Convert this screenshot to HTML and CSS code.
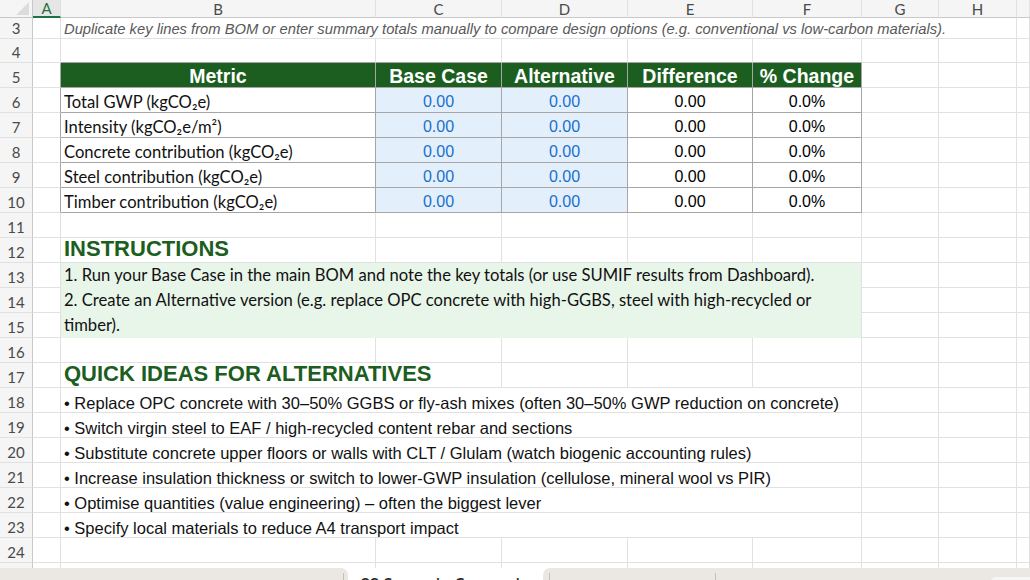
FILE: index.html
```html
<!DOCTYPE html>
<html lang="en">
<head>
  <meta charset="UTF-8">
  <title>Scenario Comparison</title>
  <link rel="stylesheet" href="styles.css">
</head>
<body>
  <table class="sheet">
    <colgroup>
      <col class="w-hdr"><col class="w-a"><col class="w-b"><col class="w-c"><col class="w-d">
      <col class="w-e"><col class="w-f"><col class="w-g"><col class="w-h"><col class="w-i">
    </colgroup>

    <!-- column letters -->
    <tr class="col-head">
      <th class="corner"><span class="tri"></span></th>
      <th class="sel">A</th><th>B</th><th>C</th><th>D</th><th>E</th><th>F</th><th>G</th><th>H</th><th></th>
    </tr>

    <tr class="r-note">
      <th>3</th><td></td>
      <td colspan="7" class="note">Duplicate key lines from BOM or enter summary totals manually to compare design options (e.g. conventional vs low-carbon materials).</td>
      <td></td>
    </tr>
    <tr class="r-gap">
      <th>4</th><td></td>
      <td class="above"></td><td class="above"></td><td class="above"></td><td class="above"></td><td class="above"></td>
      <td></td><td></td><td></td>
    </tr>

    <!-- comparison table -->
    <tr>
      <th>5</th><td class="edge"></td>
      <td class="hd">Metric</td><td class="hd">Base Case</td><td class="hd">Alternative</td><td class="hd">Difference</td><td class="hd">% Change</td>
      <td></td><td></td><td></td>
    </tr>
    <tr>
      <th>6</th><td class="edge"></td>
      <td class="metric">Total GWP (kgCO₂e)</td><td class="num input">0.00</td><td class="num input">0.00</td><td class="num">0.00</td><td class="num">0.0%</td>
      <td></td><td></td><td></td>
    </tr>
    <tr>
      <th>7</th><td class="edge"></td>
      <td class="metric">Intensity (kgCO₂e/m²)</td><td class="num input">0.00</td><td class="num input">0.00</td><td class="num">0.00</td><td class="num">0.0%</td>
      <td></td><td></td><td></td>
    </tr>
    <tr>
      <th>8</th><td class="edge"></td>
      <td class="metric">Concrete contribution (kgCO₂e)</td><td class="num input">0.00</td><td class="num input">0.00</td><td class="num">0.00</td><td class="num">0.0%</td>
      <td></td><td></td><td></td>
    </tr>
    <tr>
      <th>9</th><td class="edge"></td>
      <td class="metric">Steel contribution (kgCO₂e)</td><td class="num input">0.00</td><td class="num input">0.00</td><td class="num">0.00</td><td class="num">0.0%</td>
      <td></td><td></td><td></td>
    </tr>
    <tr>
      <th>10</th><td class="edge"></td>
      <td class="metric">Timber contribution (kgCO₂e)</td><td class="num input">0.00</td><td class="num input">0.00</td><td class="num">0.00</td><td class="num">0.0%</td>
      <td></td><td></td><td></td>
    </tr>

    <tr>
      <th>11</th><td></td><td></td><td></td><td></td><td></td><td></td><td></td><td></td><td></td>
    </tr>

    <!-- instructions -->
    <tr>
      <th>12</th><td></td>
      <td class="section">INSTRUCTIONS</td><td></td><td></td><td></td><td></td>
      <td></td><td></td><td></td>
    </tr>
    <tr>
      <th>13</th><td></td>
      <td colspan="5" class="instr">1. Run your Base Case in the main BOM and note the key totals (or use SUMIF results from Dashboard).</td>
      <td></td><td></td><td></td>
    </tr>
    <tr>
      <th>14</th><td></td>
      <td colspan="5" rowspan="2" class="instr">2. Create an Alternative version (e.g. replace OPC concrete with high-GGBS, steel with high-recycled or<br>timber).</td>
      <td></td><td></td><td></td>
    </tr>
    <tr>
      <th>15</th><td></td><td></td><td></td><td></td>
    </tr>

    <tr>
      <th>16</th><td></td><td></td><td></td><td></td><td></td><td></td><td></td><td></td><td></td>
    </tr>

    <!-- ideas -->
    <tr>
      <th>17</th><td></td>
      <td colspan="2" class="section">QUICK IDEAS FOR ALTERNATIVES</td><td></td><td></td><td></td>
      <td></td><td></td><td></td>
    </tr>
    <tr>
      <th>18</th><td></td>
      <td colspan="5" class="idea">• Replace OPC concrete with 30–50% GGBS or fly-ash mixes (often 30–50% GWP reduction on concrete)</td>
      <td></td><td></td><td></td>
    </tr>
    <tr>
      <th>19</th><td></td>
      <td colspan="5" class="idea">• Switch virgin steel to EAF / high-recycled content rebar and sections</td>
      <td></td><td></td><td></td>
    </tr>
    <tr>
      <th>20</th><td></td>
      <td colspan="5" class="idea">• Substitute concrete upper floors or walls with CLT / Glulam (watch biogenic accounting rules)</td>
      <td></td><td></td><td></td>
    </tr>
    <tr>
      <th>21</th><td></td>
      <td colspan="5" class="idea">• Increase insulation thickness or switch to lower-GWP insulation (cellulose, mineral wool vs PIR)</td>
      <td></td><td></td><td></td>
    </tr>
    <tr>
      <th>22</th><td></td>
      <td colspan="5" class="idea">• Optimise quantities (value engineering) – often the biggest lever</td>
      <td></td><td></td><td></td>
    </tr>
    <tr>
      <th>23</th><td></td>
      <td colspan="5" class="idea">• Specify local materials to reduce A4 transport impact</td>
      <td></td><td></td><td></td>
    </tr>
    <tr>
      <th>24</th><td></td><td></td><td></td><td></td><td></td><td></td><td></td><td></td><td></td>
    </tr>
    <tr class="r-cut">
      <th></th><td></td><td></td><td></td><td></td><td></td><td></td><td></td><td></td><td></td>
    </tr>
  </table>

  <!-- sheet tabs -->
  <div class="tabbar">
    <div class="tab-rest tab-left"><span class="sep"></span></div>
    <div class="tab-active">22 Scenario Comparison</div>
    <div class="tab-rest tab-right">
      <span class="sep first"></span>
      <span class="sep second"></span>
      <span class="thumb"></span>
    </div>
  </div>
</body>
</html>
```

FILE: styles.css
```css
body {
  margin: 0;
  width: 1030px;
  height: 580px;
  overflow: hidden;
  background: #fff;
  font-family: "Liberation Sans", Arial, sans-serif;
}

.sheet {
  border-collapse: separate;
  border-spacing: 0;
  table-layout: fixed;
  width: 1030px;
}

.w-hdr { width: 33px; }
.w-a { width: 28px; }
.w-b { width: 315px; }
.w-c { width: 126px; }
.w-d { width: 126px; }
.w-e { width: 125px; }
.w-f { width: 109px; }
.w-g { width: 77px; }
.w-h { width: 78px; }
.w-i { width: 13px; }

.sheet tr {
  height: 25px;
}

.sheet td,
.sheet th {
  padding: 0 3px;
  border-right: 1px solid #e1e1e1;
  border-bottom: 1px solid #e1e1e1;
  white-space: nowrap;
  overflow: hidden;
  vertical-align: bottom;
  line-height: 20px;
  font-weight: normal;
  text-align: left;
}

/* row numbers */
.sheet th {
  padding: 0;
  background: #f5f5f5;
  border-right-color: #c8c8c8;
  text-align: center;
  font-family: Lato, sans-serif;
  font-size: 15px;
  color: #4a4a4a;
}

/* column letters */
.sheet .col-head {
  height: 18px;
}

.sheet .col-head th {
  line-height: 16px;
  vertical-align: middle;
  border-right-color: #e1e1e1;
  border-bottom: 1px solid #c8c8c8;
}

.sheet .col-head th.corner {
  position: relative;
  border-right-color: #c8c8c8;
}

.tri {
  position: absolute;
  right: 3px;
  bottom: 2px;
  width: 0;
  height: 0;
  border-left: 13px solid transparent;
  border-bottom: 13px solid #dcdcdc;
}

.sheet .col-head th.sel {
  background: #e6e6e6;
  color: #1e7145;
  border-bottom: 2px solid #1e7145;
}

.sheet .r-note { height: 20px; }
.sheet .r-gap { height: 24px; }
.sheet .r-cut { height: 5px; }
.sheet .r-cut td, .sheet .r-cut th { border-bottom: none; }

.sheet .note {
  font-style: italic;
  font-size: 14.75px;
  line-height: 18px;
  color: #595959;
}

/* comparison table */
.sheet .above {
  border-bottom-color: #a6a6a6;
}

.sheet .edge {
  border-right-color: #a6a6a6;
}

.sheet .hd,
.sheet .metric,
.sheet .num {
  border-right-color: #a6a6a6;
  border-bottom-color: #a6a6a6;
}

.sheet .hd {
  background: #1b5e20;
  color: #fff;
  font-weight: bold;
  font-size: 19.5px;
  padding-bottom: 1px;
  text-align: center;
}

.sheet .metric {
  font-family: Lato, sans-serif;
  font-size: 16.6px;
  color: #111;
}

.sheet .num {
  text-align: center;
  font-size: 16px;
  color: #000;
}

.sheet .num.input {
  background: #e3f0fb;
  color: #1a6fce;
}

/* text sections */
.sheet .section {
  overflow: visible;
  font-weight: bold;
  font-size: 22px;
  line-height: 22px;
  padding-bottom: 2px;
  color: #1b5e20;
}

.sheet .instr {
  background: #e8f5e9;
  border-bottom: none;
  vertical-align: top;
  line-height: 25px;
  font-family: Lato, sans-serif;
  font-size: 16.6px;
  color: #111;
}

.sheet .idea {
  font-size: 16.5px;
  line-height: 18px;
  color: #111;
}

/* sheet tab strip */
.tabbar {
  display: flex;
  height: 13px;
  overflow: hidden;
}

.tab-rest {
  background: #ebe8e4;
}

.tab-left {
  width: 348px;
  border-top-right-radius: 7px;
  display: flex;
  justify-content: flex-end;
  padding: 5px 4px 0 0;
  box-sizing: border-box;
}

.sep {
  width: 1px;
  background: #c4c0bb;
}

.tab-active {
  width: 195px;
  box-sizing: border-box;
  padding: 8px 0 0 13px;
  font-family: "Open Sans", sans-serif;
  font-weight: 600;
  font-size: 16px;
  line-height: 16px;
  color: #262626;
  white-space: nowrap;
}

.tab-right {
  flex: 1;
  position: relative;
  border-top-left-radius: 7px;
  padding-top: 5px;
}

.tab-right .sep {
  position: absolute;
  top: 5px;
  bottom: 0;
}

.tab-right .first { left: 6px; }
.tab-right .second { left: 172px; }

.thumb {
  position: absolute;
  left: 448px;
  top: 9px;
  width: 60px;
  height: 10px;
  border-radius: 5px;
  background: #f7f6f4;
}
```
